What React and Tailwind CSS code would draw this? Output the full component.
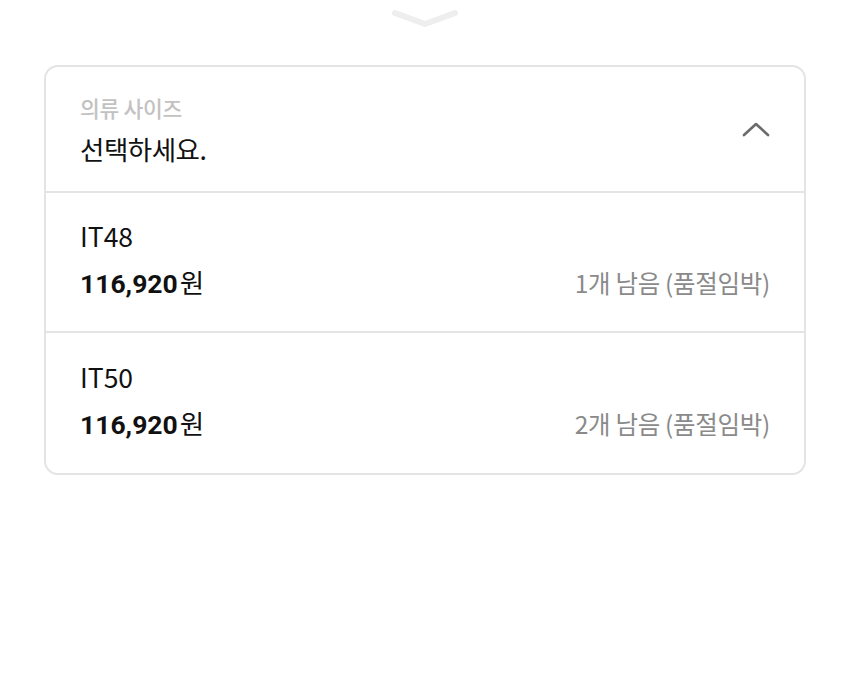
import React from 'react'

const FONT = { fontFamily: '"Noto Sans CJK KR", "Noto Sans", sans-serif' }

const items = [
  { size: 'IT48', price: '116,920', stock: '1개 남음 (품절임박)' },
  { size: 'IT50', price: '116,920', stock: '2개 남음 (품절임박)' },
]

export default function App() {
  return (
    <div className="w-[850px] h-[679px] bg-white overflow-hidden" style={FONT}>
      {/* sheet handle */}
      <div className="flex justify-center h-[65px]">
        <svg width="70" height="28" viewBox="0 0 70 28" className="mt-[2px]">
          <path d="M5 11 L35 22 L65 11" fill="none" stroke="#eeeeee" strokeWidth="6" strokeLinecap="round" strokeLinejoin="round" />
        </svg>
      </div>

      <div className="mx-[44px] border-2 border-[#e4e4e4] rounded-[14px]">
        <div className="flex items-center justify-between h-[126px] pl-[34px] pr-[34px] border-b-2 border-[#e4e4e4]">
          <div className="flex flex-col mt-[4px]">
            <span className="text-[21.5px] leading-[28px] font-medium text-[#c2c2c2] tracking-[-0.3px]">의류 사이즈</span>
            <span className="text-[26.5px] leading-[38px] text-[#111] mt-[8px] tracking-[-0.5px]">선택하세요.</span>
          </div>
          <svg width="28" height="20" viewBox="0 0 28 20">
            <path d="M2 16 L14 5 L26 16" fill="none" stroke="#6b6b6b" strokeWidth="2.6" strokeLinecap="round" strokeLinejoin="round" />
          </svg>
        </div>

        {items.map((it, i) => (
          <div
            key={it.size}
            className={`flex flex-col justify-center h-[140px] pl-[34px] pr-[34px] ${i === 0 ? 'border-b-2 border-[#e4e4e4]' : ''}`}
          >
            <div className="text-[26.5px] leading-[34px] text-[#111] -mt-[4px]">{it.size}</div>
            <div className="flex items-center justify-between mt-[12px]">
              <div className="text-[26.5px] leading-[34px] text-[#111]">
                <span className="font-bold" style={{ fontFamily: '"Roboto", "Noto Sans CJK KR", sans-serif' }}>{it.price}</span>
                <span className="ml-[2px]">원</span>
              </div>
              <div className="text-[24.5px] leading-[34px] text-[#8a8a8a] tracking-[-0.3px]">{it.stock}</div>
            </div>
          </div>
        ))}
      </div>
    </div>
  )
}
